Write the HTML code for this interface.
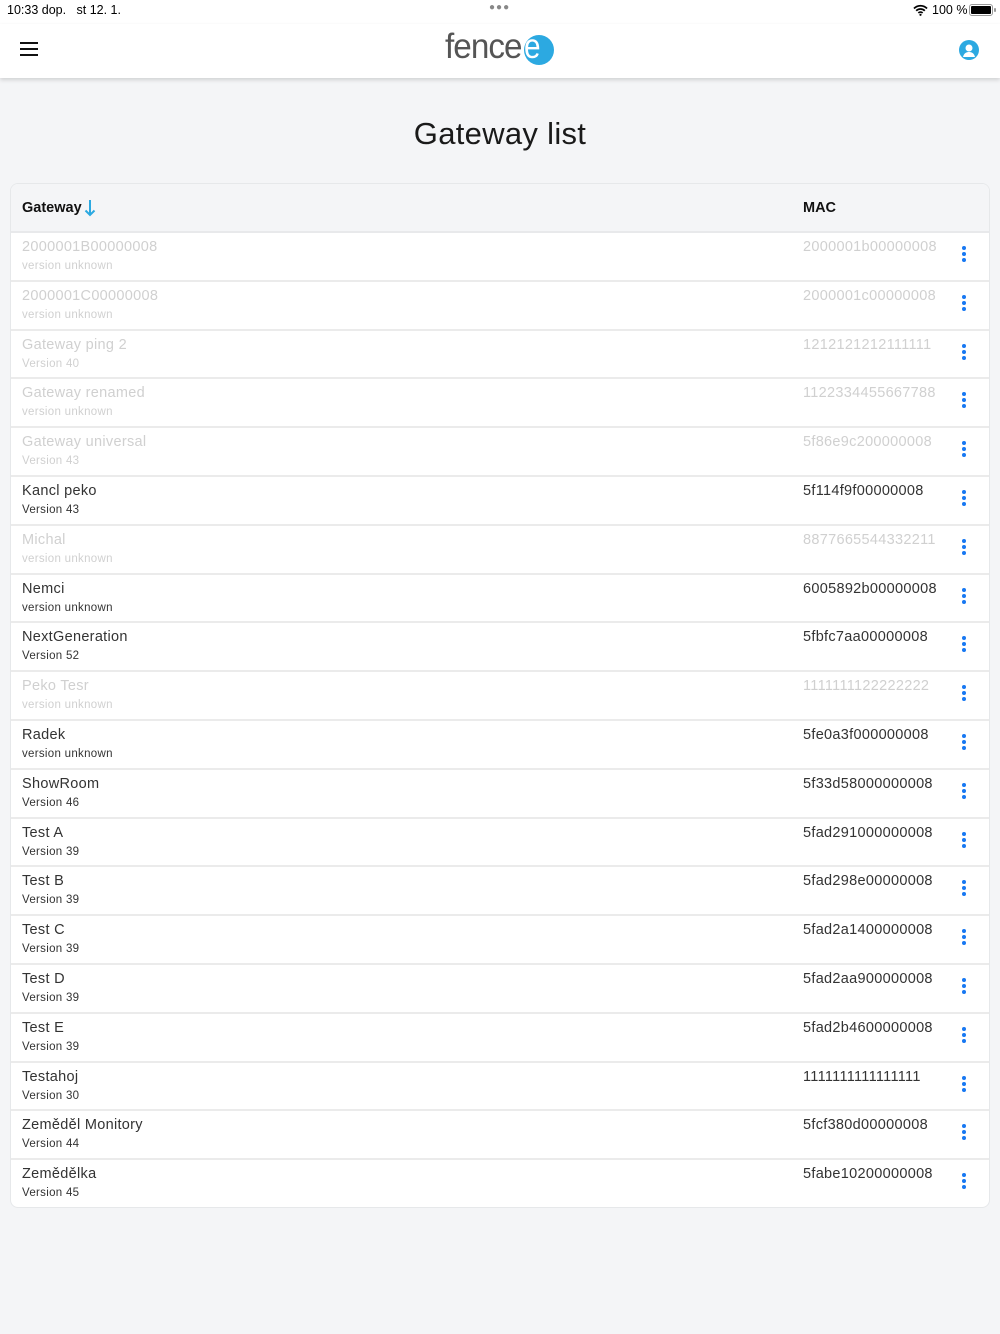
<!DOCTYPE html>
<html><head><meta charset="utf-8">
<style>
*{margin:0;padding:0;box-sizing:border-box}
body{width:1000px;height:1334px;background:#f4f5f7;font-family:"Liberation Sans",sans-serif;position:relative;overflow:hidden;color:#333}
.status{position:absolute;top:0;left:0;width:1000px;height:24px;background:#fff;font-size:12.5px;color:#000}
.top{position:absolute;top:24px;left:0;width:1000px;height:54px;background:#fff;box-shadow:0 2px 4px rgba(0,0,0,.15)}
h1{position:absolute;top:116px;width:1000px;text-align:center;font-weight:normal;font-size:31px;color:#1a1a1a;letter-spacing:.3px}
.tbl{position:absolute;left:10px;top:183px;width:980px;border:1px solid #e6e8ea;border-radius:8px;background:#fff;overflow:hidden}
.hd{height:49px;background:#f4f5f7;border-bottom:2px solid #e8e9eb;position:relative;font-weight:bold;font-size:14.5px;color:#111}
.row{height:48.8px;border-bottom:2px solid #ebebeb;position:relative}
.row:last-child{border-bottom:none;height:47px}
.n{position:absolute;left:11px;top:6px;font-size:14.5px;color:#333;letter-spacing:.3px}
.v{position:absolute;left:11px;top:27px;font-size:11.5px;color:#333;letter-spacing:.3px}
.m{position:absolute;left:792px;top:6px;font-size:14.5px;color:#333;letter-spacing:.3px}
.g .n,.g .v,.g .m{color:#d0d0d0}
.dots{position:absolute;left:951px;top:13px;width:4px}
.dots i{display:block;width:4px;height:4px;border-radius:50%;background:#1778f2;margin-bottom:2px}
</style></head><body>
<div class="status">
<span style="position:absolute;left:7px;top:3px">10:33 dop.&nbsp;&nbsp; st 12. 1.</span>
<span style="position:absolute;left:489px;top:2px;font-size:10px;color:#888;letter-spacing:1px">●●●</span>
<svg style="position:absolute;left:913px;top:4px" width="15" height="12" viewBox="0 0 15 12"><path d="M1 4.5a9 9 0 0 1 13 0M3.2 6.8a6 6 0 0 1 8.6 0M5.4 9a3 3 0 0 1 4.2 0" stroke="#000" stroke-width="1.8" fill="none"/><circle cx="7.5" cy="10.8" r="1.1"/></svg>
<span style="position:absolute;left:932px;top:3px">100 %</span>
<div style="position:absolute;left:969px;top:4px;width:24px;height:12px;border:1px solid #999;border-radius:3px;padding:1px"><div style="width:100%;height:100%;background:#000;border-radius:1px"></div></div>
<div style="position:absolute;left:994px;top:8px;width:2px;height:4px;background:#999;border-radius:1px"></div>
</div>
<div class="top">
<div style="position:absolute;left:20px;top:18px;width:18px">
<div style="height:2px;background:#111;margin-bottom:4px"></div><div style="height:2px;background:#111;margin-bottom:4px"></div><div style="height:2px;background:#111"></div></div>
<div style="position:absolute;left:445px;top:3px;font-size:35px;color:#555;letter-spacing:-1px;transform:scaleX(.95);transform-origin:left">fence</div>
<div style="position:absolute;left:524px;top:11px;width:30px;height:30px;border-radius:50%;background:#2ca9e1"></div>
<div style="position:absolute;left:524px;top:3px;font-size:35px;color:#fff;transform:scaleX(.85);transform-origin:left">e</div>
<svg style="position:absolute;left:959px;top:16px" width="20" height="20" viewBox="0 0 20 20"><circle cx="10" cy="10" r="10" fill="#2ca9e1"/><circle cx="10" cy="8" r="3.5" fill="#fff"/><path d="M4 17c1-4 3.5-5 6-5s5 1 6 5" fill="#fff"/></svg>
</div>
<h1>Gateway list</h1>
<div class="tbl">
<div class="hd"><span style="position:absolute;left:11px;top:16px">Gateway</span><svg style="position:absolute;left:73px;top:15px" width="12" height="18" viewBox="0 0 12 18"><path d="M6 1v15M1.5 11.5L6 16l4.5-4.5" stroke="#2ca9e1" stroke-width="2" fill="none"/></svg><span style="position:absolute;left:792px;top:16px">MAC</span></div>
<div class="row g"><div class="n">2000001B00000008</div><div class="v">version unknown</div><div class="m">2000001b00000008</div><div class="dots"><i></i><i></i><i></i></div></div>
<div class="row g"><div class="n">2000001C00000008</div><div class="v">version unknown</div><div class="m">2000001c00000008</div><div class="dots"><i></i><i></i><i></i></div></div>
<div class="row g"><div class="n">Gateway ping 2</div><div class="v">Version 40</div><div class="m">1212121212111111</div><div class="dots"><i></i><i></i><i></i></div></div>
<div class="row g"><div class="n">Gateway renamed</div><div class="v">version unknown</div><div class="m">1122334455667788</div><div class="dots"><i></i><i></i><i></i></div></div>
<div class="row g"><div class="n">Gateway universal</div><div class="v">Version 43</div><div class="m">5f86e9c200000008</div><div class="dots"><i></i><i></i><i></i></div></div>
<div class="row"><div class="n">Kancl peko</div><div class="v">Version 43</div><div class="m">5f114f9f00000008</div><div class="dots"><i></i><i></i><i></i></div></div>
<div class="row g"><div class="n">Michal</div><div class="v">version unknown</div><div class="m">8877665544332211</div><div class="dots"><i></i><i></i><i></i></div></div>
<div class="row"><div class="n">Nemci</div><div class="v">version unknown</div><div class="m">6005892b00000008</div><div class="dots"><i></i><i></i><i></i></div></div>
<div class="row"><div class="n">NextGeneration</div><div class="v">Version 52</div><div class="m">5fbfc7aa00000008</div><div class="dots"><i></i><i></i><i></i></div></div>
<div class="row g"><div class="n">Peko Tesr</div><div class="v">version unknown</div><div class="m">1111111122222222</div><div class="dots"><i></i><i></i><i></i></div></div>
<div class="row"><div class="n">Radek</div><div class="v">version unknown</div><div class="m">5fe0a3f000000008</div><div class="dots"><i></i><i></i><i></i></div></div>
<div class="row"><div class="n">ShowRoom</div><div class="v">Version 46</div><div class="m">5f33d58000000008</div><div class="dots"><i></i><i></i><i></i></div></div>
<div class="row"><div class="n">Test A</div><div class="v">Version 39</div><div class="m">5fad291000000008</div><div class="dots"><i></i><i></i><i></i></div></div>
<div class="row"><div class="n">Test B</div><div class="v">Version 39</div><div class="m">5fad298e00000008</div><div class="dots"><i></i><i></i><i></i></div></div>
<div class="row"><div class="n">Test C</div><div class="v">Version 39</div><div class="m">5fad2a1400000008</div><div class="dots"><i></i><i></i><i></i></div></div>
<div class="row"><div class="n">Test D</div><div class="v">Version 39</div><div class="m">5fad2aa900000008</div><div class="dots"><i></i><i></i><i></i></div></div>
<div class="row"><div class="n">Test E</div><div class="v">Version 39</div><div class="m">5fad2b4600000008</div><div class="dots"><i></i><i></i><i></i></div></div>
<div class="row"><div class="n">Testahoj</div><div class="v">Version 30</div><div class="m">1111111111111111</div><div class="dots"><i></i><i></i><i></i></div></div>
<div class="row"><div class="n">Zeměděl Monitory</div><div class="v">Version 44</div><div class="m">5fcf380d00000008</div><div class="dots"><i></i><i></i><i></i></div></div>
<div class="row"><div class="n">Zemědělka</div><div class="v">Version 45</div><div class="m">5fabe10200000008</div><div class="dots"><i></i><i></i><i></i></div></div>
</div>
</body></html>
